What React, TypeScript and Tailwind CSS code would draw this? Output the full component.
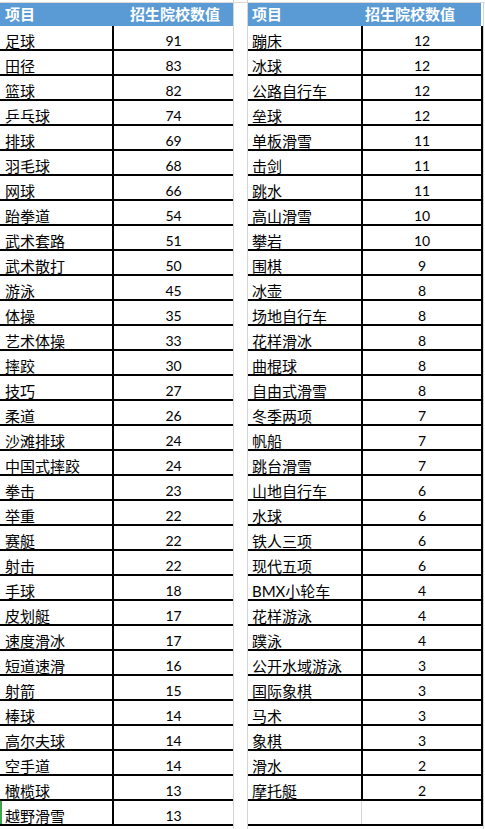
import React from "react";

const left: [string, number][] = [
  ["足球", 91], ["田径", 83], ["篮球", 82], ["乒乓球", 74], ["排球", 69], ["羽毛球", 68],
  ["网球", 66], ["跆拳道", 54], ["武术套路", 51], ["武术散打", 50], ["游泳", 45], ["体操", 35],
  ["艺术体操", 33], ["摔跤", 30], ["技巧", 27], ["柔道", 26], ["沙滩排球", 24], ["中国式摔跤", 24],
  ["拳击", 23], ["举重", 22], ["赛艇", 22], ["射击", 22], ["手球", 18], ["皮划艇", 17],
  ["速度滑冰", 17], ["短道速滑", 16], ["射箭", 15], ["棒球", 14], ["高尔夫球", 14], ["空手道", 14],
  ["橄榄球", 13], ["越野滑雪", 13],
];

const right: [string, number][] = [
  ["蹦床", 12], ["冰球", 12], ["公路自行车", 12], ["垒球", 12], ["单板滑雪", 11], ["击剑", 11],
  ["跳水", 11], ["高山滑雪", 10], ["攀岩", 10], ["围棋", 9], ["冰壶", 8], ["场地自行车", 8],
  ["花样滑冰", 8], ["曲棍球", 8], ["自由式滑雪", 8], ["冬季两项", 7], ["帆船", 7], ["跳台滑雪", 7],
  ["山地自行车", 6], ["水球", 6], ["铁人三项", 6], ["现代五项", 6], ["BMX小轮车", 4], ["花样游泳", 4],
  ["蹼泳", 4], ["公开水域游泳", 3], ["国际象棋", 3], ["马术", 3], ["象棋", 3], ["滑水", 2],
  ["摩托艇", 2],
];

const font = { fontFamily: '"Lato", "Noto Sans CJK SC", sans-serif' };

function LeftTable() {
  return (
    <div className="flex w-[233px] flex-col">
      <div className="h-[3px] border-b border-[#d9d9d9]" />
      <div className="flex h-[23px] bg-[#5b9bd5] text-[15px] font-bold leading-[23px] text-white">
        <div className="w-[114px] pl-[5px]">项目</div>
        <div className="flex-1 pl-[16px]">招生院校数值</div>
      </div>
      {left.map(([n, v], i) => (
        <div key={n} className="relative flex h-[25px] border-b-2 border-black">
          {i === left.length - 1 && (
            <div className="absolute left-0 top-0 h-[23px] w-[2px] bg-[#3fa34d]" />
          )}
          <div className="w-[112px] whitespace-nowrap pl-[5px] pt-[7px] text-[15px] leading-[16px] text-black">
            {n}
          </div>
          <div className="w-[2px] bg-black" />
          <div className="flex-1 pt-[7px] text-center text-[14px] leading-[16px] text-black">{v}</div>
        </div>
      ))}
    </div>
  );
}

function RightTable() {
  return (
    <div className="flex w-[235px] flex-col">
      <div className="h-[3px] border-b border-[#d9d9d9]" />
      <div className="flex h-[23px] text-[15px] font-bold leading-[23px] text-white">
        <div className="flex w-[233px] bg-[#5b9bd5]">
          <div className="w-[115px] pl-[4px]">项目</div>
          <div className="flex-1 pl-[2px]">招生院校数值</div>
        </div>
        <div className="w-[2px]" />
      </div>
      {right.map(([n, v]) => (
        <div key={n} className="flex h-[25px] border-b-2 border-black">
          <div className="w-[113px] whitespace-nowrap pl-[4px] pt-[7px] text-[15px] leading-[16px] text-black">
            {n}
          </div>
          <div className="w-[2px] bg-black" />
          <div className="flex-1 pt-[7px] text-center text-[14px] leading-[16px] text-black">{v}</div>
          <div className="w-[2px] bg-black" />
        </div>
      ))}
      <div className="flex h-[25px] border-b-2 border-black">
        <div className="w-[114px] border-r border-[#d4d4d4]" />
        <div className="flex-1" />
        <div className="w-[2px] bg-black" />
      </div>
    </div>
  );
}

export default function App() {
  return (
    <div className="flex h-[829px] w-[485px] overflow-hidden bg-white" style={font}>
      <LeftTable />
      <div className="w-[1px] bg-[#d4d4d4]" />
      <div className="flex w-[13px] flex-col">
        <div className="h-[3px] border-b border-[#d9d9d9]" />
      </div>
      <div className="w-[1px] bg-[#d4d4d4]" />
      <RightTable />
      <div className="flex w-[2px] flex-col">
        <div className="h-[3px] border-b border-[#d9d9d9]" />
        <div className="flex-1 border-l border-[#d4d4d4]" />
      </div>
    </div>
  );
}
